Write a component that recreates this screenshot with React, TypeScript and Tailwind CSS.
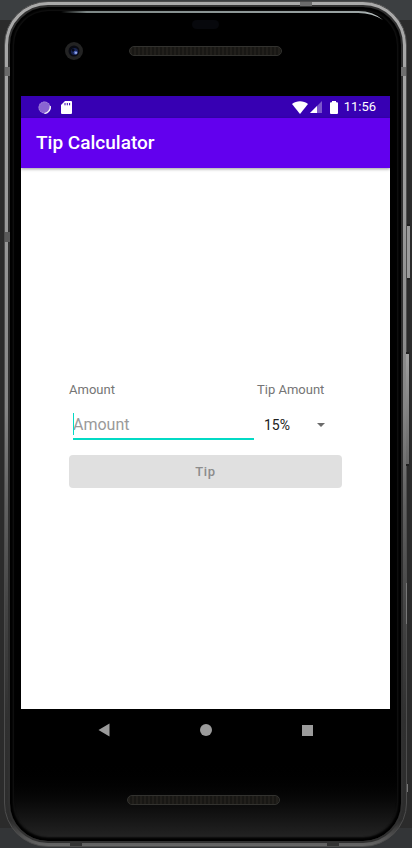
import React, { useState } from 'react';

function SpeakerGrille() {
  return (
    <div className="h-[10px] w-[153px] rounded-full border border-[#32322f] bg-[repeating-linear-gradient(90deg,#211f1b_0px,#211f1b_2px,#181714_2px,#181714_4px)]" />
  );
}

function Camera() {
  return (
    <svg viewBox="0 0 18 18" className="size-[18px]" aria-hidden="true">
      <circle cx="9" cy="9" r="9" fill="#232323" />
      <circle cx="9" cy="9" r="5.5" fill="#090a12" />
      <circle cx="9.5" cy="9.5" r="3.6" fill="#18244f" />
      <circle cx="8" cy="8" r="1.5" fill="#070a18" />
      <circle cx="10.6" cy="10.6" r="1.9" fill="#4a60b4" />
      <circle cx="11" cy="10.8" r="0.9" fill="#b8c6f4" />
    </svg>
  );
}

function TopBezel() {
  return (
    <div className="h-[89px] pt-[13px]">
      <div className="mx-auto h-[9px] w-[27px] rounded-full bg-[#07080c]" />
      <div className="mt-[13px] grid grid-cols-[1fr_auto_1fr] items-center">
        <div className="flex justify-center pr-[2px]">
          <Camera />
        </div>
        <SpeakerGrille />
      </div>
    </div>
  );
}

function StatusBar() {
  return (
    <div className="flex h-[22px] items-center justify-between bg-[#3700b3] pr-[14px] pl-[17px] text-white">
      <div className="flex items-center gap-[10px]">
        <svg viewBox="0 0 13 13" className="size-[13px]" aria-hidden="true">
          <circle cx="6.5" cy="6.5" r="6" fill="#8a64d2" />
          <circle cx="6.5" cy="6.5" r="5.5" fill="none" stroke="#a88bdd" strokeDasharray="1.2 1.2" />
          <path d="M12.3 5A6 6 0 0 1 6.5 12.6 8.5 8.5 0 0 0 12.3 5Z" fill="#fff" stroke="#fff" strokeWidth="0.7" />
        </svg>
        <svg viewBox="0 0 11 13" className="h-[13px] w-[11px]" aria-hidden="true">
          <path d="M4 0H10Q11 0 11 1V12Q11 13 10 13H1Q0 13 0 12V4Z" fill="#fff" />
          <path d="M4 2V4.3M6.3 2V4.3M8.6 2V4.3" stroke="#3700b3" />
        </svg>
      </div>
      <div className="flex items-center">
        <svg viewBox="0 0 16 13" className="h-[13px] w-4" aria-hidden="true">
          <path d="M0 3C4.5-.7 11.5-.7 16 3L8 13Z" fill="#fff" />
        </svg>
        <svg viewBox="0 0 12 12" className="ml-[2px] h-3 w-3" aria-hidden="true">
          <path d="M0 12L12 0V12Z" fill="#7c56cc" />
          <path d="M0 12L7 5V12Z" fill="#fff" />
        </svg>
        <svg viewBox="0 0 8 13" className="ml-2 h-[13px] w-2" aria-hidden="true">
          <path d="M2 0H6V1.3H7Q8 1.3 8 2.3V12Q8 13 7 13H1Q0 13 0 12V2.3Q0 1.3 1 1.3H2Z" fill="#fff" />
        </svg>
        <span className="ml-[6px] text-[13px] leading-4">11:56</span>
      </div>
    </div>
  );
}

function TipForm() {
  const [amount, setAmount] = useState('');
  const [rate, setRate] = useState('15%');
  return (
    <form className="mx-12 grid grid-cols-[188px_1fr] text-[13px] text-[#757575]" onSubmit={(e) => e.preventDefault()}>
      <label htmlFor="amount" className="leading-4">Amount</label>
      <label htmlFor="rate" className="leading-4">Tip Amount</label>
      <div className="relative mt-3 mr-[3px] ml-1">
        <input
          id="amount"
          inputMode="decimal"
          placeholder="Amount"
          value={amount}
          onChange={(e) => setAmount(e.target.value)}
          className="block h-[30px] w-full border-b-2 border-[#03dac5] text-base text-[#212121] caret-[#03dac5] outline-none placeholder:text-[#9a9a9a]"
        />
        {amount === '' && <span className="absolute top-[3px] left-0 h-[22px] w-px bg-[#03dac5]" />}
      </div>
      <div className="relative mt-3">
        <select
          id="rate"
          value={rate}
          onChange={(e) => setRate(e.target.value)}
          className="block h-[30px] w-full appearance-none bg-transparent pl-[7px] text-sm text-[#212121] outline-none"
        >
          <option>15%</option>
          <option>18%</option>
          <option>20%</option>
        </select>
        <svg viewBox="0 0 8 4" className="pointer-events-none absolute top-[13px] right-[17px] h-1 w-2" aria-hidden="true">
          <path d="M0 0H8L4 4Z" fill="#6b6b6b" />
        </svg>
      </div>
      <button
        type="submit"
        disabled
        className="col-span-2 mt-[15px] h-[33px] rounded bg-[#e0e0e0] text-[13px] font-medium tracking-wider text-[#8c8c8c]"
      >
        Tip
      </button>
    </form>
  );
}

function NavigationBar() {
  return (
    <nav className="flex h-[42px] items-center justify-center gap-[83px]">
      <button type="button" aria-label="Back" className="flex w-[19px] justify-center">
        <svg viewBox="0 0 12 14" className="h-[14px] w-3" aria-hidden="true">
          <path d="M11.5.5V13.5L.5 7Z" fill="#9b9b9b" />
        </svg>
      </button>
      <button type="button" aria-label="Home" className="flex w-[19px] justify-center">
        <span className="size-3 rounded-full bg-[#9b9b9b]" />
      </button>
      <button type="button" aria-label="Overview" className="flex w-[19px] justify-center">
        <span className="size-[11px] bg-[#9b9b9b]" />
      </button>
    </nav>
  );
}

function FrameDetails() {
  return (
    <div aria-hidden="true" className="pointer-events-none">
      <svg viewBox="0 0 326 10" preserveAspectRatio="none" className="absolute top-[9px] right-[22px] left-14 h-[10px] w-[calc(100%-78px)]">
        <defs>
          <linearGradient id="gloss" x1="0" x2="1" y1="0" y2="0">
            <stop offset="0" stopColor="#000" />
            <stop offset="0.08" stopColor="#7d8786" />
            <stop offset="0.92" stopColor="#9ba4a4" />
            <stop offset="1" stopColor="#c3caca" />
          </linearGradient>
        </defs>
        <path d="M0 0H300Q315 0 325 9Q314 2 300 2H0Z" fill="url(#gloss)" />
      </svg>
      <div className="absolute top-[65px] left-0 h-[9px] w-[5px] bg-[#6a6a6a]" />
      <div className="absolute top-[65px] right-0 h-[9px] w-[5px] bg-[#6f6f6f]" />
      <div className="absolute top-[230px] left-0 h-[10px] w-[5px] bg-[#595959]" />
      <div className="absolute top-0 right-[94px] h-1 w-3 bg-[#6c6c6c]" />
      <div className="absolute right-[67px] bottom-0 h-1 w-3 bg-[#333]" />
      <div className="absolute bottom-0 left-[65px] h-1 w-3 bg-[#333]" />
      <div className="absolute top-[222px] -right-1 h-[56px] w-[3px] border-y-2 border-[#202020] bg-[#9b9b9b]" />
      <div className="absolute top-[350px] -right-[3px] h-[114px] w-[3px] border-y-2 border-[#202020] bg-linear-to-b from-[#a0a0a0] to-[#666]" />
      <div className="absolute top-[581px] -right-px h-[41px] w-px bg-[#777]" />
      <div className="absolute right-[-2px] bottom-[54px] h-2 w-px bg-[#777]" />
    </div>
  );
}

export default function App() {
  return (
    <div className="flex min-h-screen flex-col bg-[linear-gradient(#3c3f41_0,#3c3f41_20px,#2b2b2b_20px,#2b2b2b_calc(100%-20px),#333537_calc(100%-20px))] pt-px pr-[5px] pb-px pl-1 font-['Roboto','Liberation_Sans',sans-serif]">
      <div className="relative flex flex-1 flex-col rounded-[44px] border border-[#4d4d4d] bg-[linear-gradient(#aaa,#999_25%,#858585_48%,#606060_60%,#444_72%,#303030_85%,#2c2c2c_97%,#666)] p-[3px]">
        <div className="flex flex-1 flex-col rounded-[40px] border-2 border-[#303030] bg-linear-to-b from-black from-90% to-[#262626] px-[11px] shadow-[inset_0_0_2px_3px_#000,inset_0_0_1px_4px_#171717]">
          <TopBezel />
          <main className="flex flex-1 flex-col bg-white">
            <StatusBar />
            <header className="relative flex h-[50px] items-center bg-[#6200ee] px-[15px] shadow-[0_1px_3px_rgba(0,0,0,0.4)]">
              <h1 className="text-[19px] leading-6 font-medium text-white">Tip Calculator</h1>
            </header>
            <section className="flex flex-1 flex-col justify-center pb-[7px]">
              <TipForm />
            </section>
          </main>
          <NavigationBar />
          <div className="flex h-[90px] justify-center pt-[44px] pr-[5px]">
            <SpeakerGrille />
          </div>
        </div>
        <FrameDetails />
      </div>
    </div>
  );
}
